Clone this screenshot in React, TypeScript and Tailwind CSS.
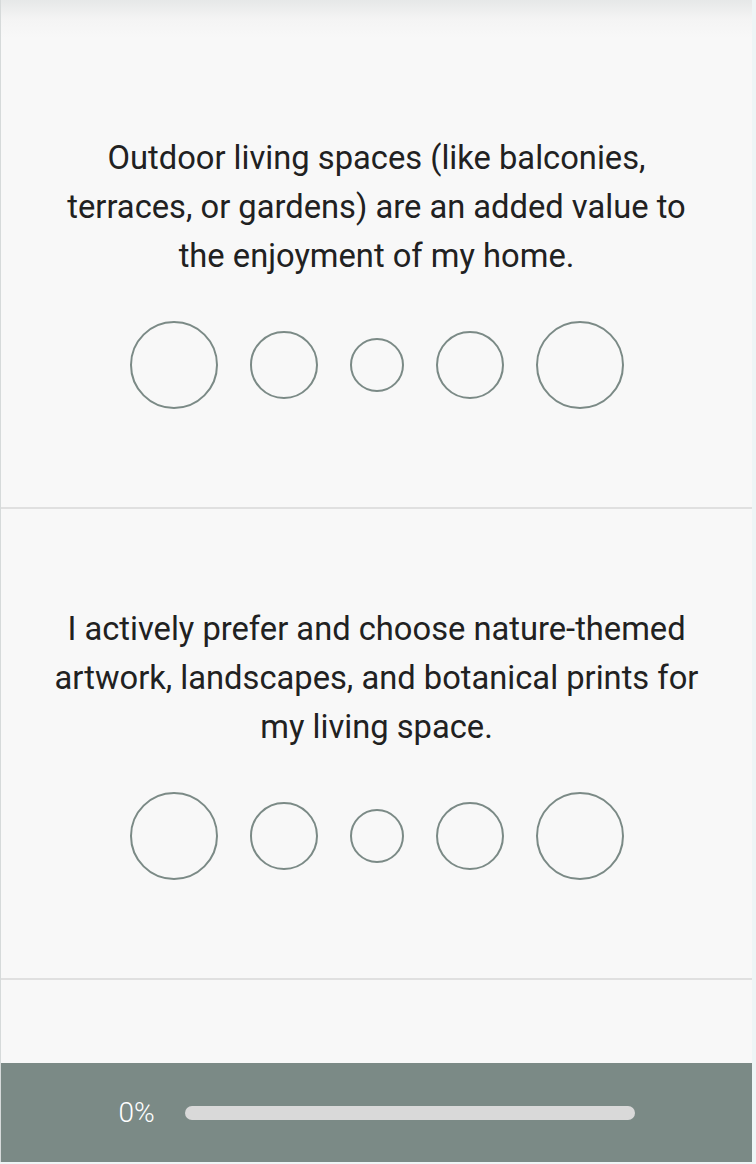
import React from 'react';

const questions = [
  'Outdoor living spaces (like balconies, terraces, or gardens) are an added value to the enjoyment of my home.',
  'I actively prefer and choose nature-themed artwork, landscapes, and botanical prints for my living space.',
];

const sizes = ['w-[88px] h-[88px]', 'w-[68px] h-[68px]', 'w-[54px] h-[54px]', 'w-[68px] h-[68px]', 'w-[88px] h-[88px]'];

const Question: React.FC<{ text: string }> = ({ text }) => (
  <section className="flex flex-col items-center border-b-2 border-[#e0e0e0] px-[48px] pt-[96px] pb-[98px]">
    <p className="text-center text-[32.7px] leading-[49px] text-[#212121]">{text}</p>
    <div className="mt-[40px] flex items-center gap-8">
      {sizes.map((s, i) => (
        <button
          key={i}
          type="button"
          className={`${s} rounded-full border-2 border-[#7b8a86] bg-transparent`}
        />
      ))}
    </div>
  </section>
);

export default function App() {
  return (
    <div className="min-h-screen bg-[#eef5f6] pr-[4px] pb-[2px] font-['Roboto',sans-serif]">
      <div className="flex w-[752px] flex-col border-l border-[#d6dada] bg-[#f8f8f8]">
        {/* Top edge */}
        <div className="h-[38px] bg-gradient-to-b from-[#e6e8e8] via-[#f4f4f4] to-[#f8f8f8]" />

        {questions.map((q, i) => (
          <Question key={i} text={q} />
        ))}

        <div className="h-[83px]" />

        {/* Footer progress */}
        <footer className="flex h-[99px] items-center justify-center gap-[30px] bg-[#7b8a86]">
          <span className="text-[28px] font-light text-white">0%</span>
          <div className="h-[14px] w-[450px] rounded-full bg-[#d9d9d9]" />
        </footer>
      </div>
    </div>
  );
}
